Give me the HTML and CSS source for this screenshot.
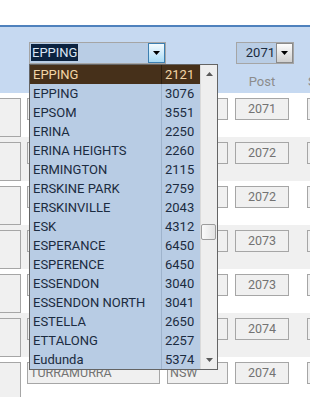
FILE: index.html
```html
<!DOCTYPE html>
<html>
<head>
<meta charset="utf-8">
<link rel="stylesheet" href="styles.css">
</head>
<body>
<div class="header">
  <div class="combos">
    <div class="combo combo-name">
      <span class="sel">EPPING</span>
      <span class="btn btn-blue"><svg width="7" height="4" viewBox="0 0 7 4"><path d="M0 0H7L3.5 4Z" fill="#000"/></svg></span>
    </div>
    <div class="combo combo-post">
      <span class="val">2071</span>
      <span class="btn btn-gray"><svg width="7" height="4" viewBox="0 0 7 4"><path d="M0 0H7L3.5 4Z" fill="#000"/></svg></span>
    </div>
  </div>
  <div class="labels">
    <span class="lbl lbl-b"></span>
    <span class="lbl lbl-d">Post</span>
    <span class="lbl lbl-e">State</span>
  </div>
</div>
<div class="rows">
  <div class="row"><div class="box a"></div><div class="box b"></div><div class="box c"></div><div class="box d">2071</div><div class="box e"></div></div>
  <div class="row alt"><div class="box a"></div><div class="box b"></div><div class="box c"></div><div class="box d">2072</div><div class="box e"></div></div>
  <div class="row"><div class="box a"></div><div class="box b"></div><div class="box c"></div><div class="box d">2072</div><div class="box e"></div></div>
  <div class="row alt"><div class="box a"></div><div class="box b"></div><div class="box c"></div><div class="box d">2073</div><div class="box e"></div></div>
  <div class="row"><div class="box a"></div><div class="box b"></div><div class="box c"></div><div class="box d">2073</div><div class="box e"></div></div>
  <div class="row alt"><div class="box a"></div><div class="box b"></div><div class="box c"></div><div class="box d">2074</div><div class="box e"></div></div>
  <div class="row"><div class="box a"></div><div class="box b">TURRAMURRA</div><div class="box c">NSW</div><div class="box d">2074</div><div class="box e"></div></div>
</div>
<div class="list">
  <div class="items">
    <div class="item selected"><span class="name">EPPING</span><span class="num">2121</span></div>
    <div class="item"><span class="name">EPPING</span><span class="num">3076</span></div>
    <div class="item"><span class="name">EPSOM</span><span class="num">3551</span></div>
    <div class="item"><span class="name">ERINA</span><span class="num">2250</span></div>
    <div class="item"><span class="name">ERINA HEIGHTS</span><span class="num">2260</span></div>
    <div class="item"><span class="name">ERMINGTON</span><span class="num">2115</span></div>
    <div class="item"><span class="name">ERSKINE PARK</span><span class="num">2759</span></div>
    <div class="item"><span class="name">ERSKINVILLE</span><span class="num">2043</span></div>
    <div class="item"><span class="name">ESK</span><span class="num">4312</span></div>
    <div class="item"><span class="name">ESPERANCE</span><span class="num">6450</span></div>
    <div class="item"><span class="name">ESPERENCE</span><span class="num">6450</span></div>
    <div class="item"><span class="name">ESSENDON</span><span class="num">3040</span></div>
    <div class="item"><span class="name">ESSENDON NORTH</span><span class="num">3041</span></div>
    <div class="item"><span class="name">ESTELLA</span><span class="num">2650</span></div>
    <div class="item"><span class="name">ETTALONG</span><span class="num">2257</span></div>
    <div class="item"><span class="name">Eudunda</span><span class="num">5374</span></div>
  </div>
  <div class="scrollbar">
    <svg class="arrow" width="7" height="4" viewBox="0 0 7 4"><path d="M0 4H7L3.5 0Z" fill="#5a5a5a"/></svg>
    <div class="thumb"></div>
    <svg class="arrow arrow-down" width="7" height="4" viewBox="0 0 7 4"><path d="M0 0H7L3.5 4Z" fill="#5a5a5a"/></svg>
  </div>
</div>
</body>
</html>
```
FILE: styles.css
```css
html, body {
  margin: 0;
  padding: 0;
}
body {
  width: 310px;
  height: 397px;
  overflow: hidden;
  position: relative;
  background: #ffffff;
  font-family: Roboto, "Liberation Sans", sans-serif;
}
.header {
  margin-top: 25px;
  border-top: 2px solid #4f81bd;
  height: 66px;
  background: #c6d9f1;
  overflow: hidden;
}
.combos {
  display: flex;
  padding-top: 15px;
}
.combo {
  flex: none;
  display: flex;
  box-sizing: border-box;
  height: 22px;
  border: 1px solid #a5a5a5;
  background: #b9cde5;
}
.combo-name {
  margin-left: 29px;
  width: 137px;
}
.combo-post {
  margin-left: 70px;
  width: 58px;
}
.sel {
  margin: 1px 0 0 1px;
  height: 17px;
  padding: 0 1px;
  background: #0c2340;
  color: #d9e5f4;
  font-size: 13px;
  line-height: 17px;
}
.val {
  flex: 1;
  text-align: right;
  padding-right: 1px;
  color: #1b2b40;
  font-size: 13px;
  line-height: 20px;
}
.btn {
  flex: none;
  margin-left: auto;
  box-sizing: border-box;
  width: 17px;
  height: 20px;
  display: flex;
  align-items: center;
  justify-content: center;
}
.btn-blue {
  border: 1px solid #3c7fb1;
  background: linear-gradient(#f4fbff, #a9dbf5);
}
.btn-gray {
  border: 1px solid #8a8a8a;
  background: linear-gradient(#fdfdfd, #d0d0d0);
}
.labels {
  display: flex;
  margin-top: 10px;
  padding-left: 28px;
  font-size: 13px;
  line-height: 15px;
  color: #8c8c8c;
  white-space: nowrap;
}
.lbl {
  flex: none;
}
.lbl-b {
  width: 207px;
}
.lbl-d {
  width: 54px;
  text-align: center;
}
.lbl-e {
  margin-left: 19px;
}
.rows {
  overflow: hidden;
}
.row {
  display: flex;
  align-items: flex-start;
  box-sizing: border-box;
  height: 44px;
  padding-top: 5px;
  background: #ffffff;
}
.row.alt {
  background: #f0f0f0;
}
.box {
  flex: none;
  box-sizing: border-box;
  height: 22px;
  border: 1px solid #a6a6a6;
  background: #f0f0f0;
  padding: 0 2px;
  font-size: 12.5px;
  line-height: 20px;
  color: #737373;
  white-space: nowrap;
  overflow: hidden;
}
.a {
  margin-left: -40px;
  width: 61px;
  height: 39px;
}
.b {
  margin-left: 6px;
  width: 133px;
}
.c {
  margin-left: 7px;
  width: 61px;
}
.d {
  margin-left: 7px;
  width: 54px;
  text-align: center;
}
.e {
  margin-left: 18px;
  width: 60px;
}
.list {
  position: absolute;
  left: 29px;
  top: 64px;
  width: 189px;
  height: 306px;
  box-sizing: border-box;
  border: 1px solid #646464;
  background: #b8cce4;
  display: flex;
}
.items {
  width: 170px;
  display: flex;
  flex-direction: column;
}
.item {
  display: flex;
  height: 19px;
  font-size: 13px;
  line-height: 19px;
  color: #1b2b40;
  white-space: nowrap;
}
.name {
  width: 131px;
  box-sizing: border-box;
  padding-left: 3px;
}
.num {
  width: 39px;
  box-sizing: border-box;
  padding-left: 3px;
  border-left: 1px solid rgba(70, 90, 120, 0.22);
}
.item.selected {
  background: #46301a;
  color: #f3d5a6;
}
.item.selected .num {
  border-left-color: rgba(0, 0, 0, 0.35);
}
.scrollbar {
  width: 17px;
  box-sizing: border-box;
  border-left: 1px solid #dadada;
  background: #eeeeee;
  display: flex;
  flex-direction: column;
  align-items: center;
  padding-top: 7px;
  padding-bottom: 7px;
}
.arrow {
  display: block;
  flex: none;
}
.thumb {
  margin-top: 148px;
  align-self: flex-start;
  width: 15px;
  height: 16px;
  box-sizing: border-box;
  border: 1px solid #9c9c9c;
  border-radius: 2px;
  background: linear-gradient(90deg, #fafafa, #e2e2e2);
}
.arrow-down {
  margin-top: auto;
}
```
